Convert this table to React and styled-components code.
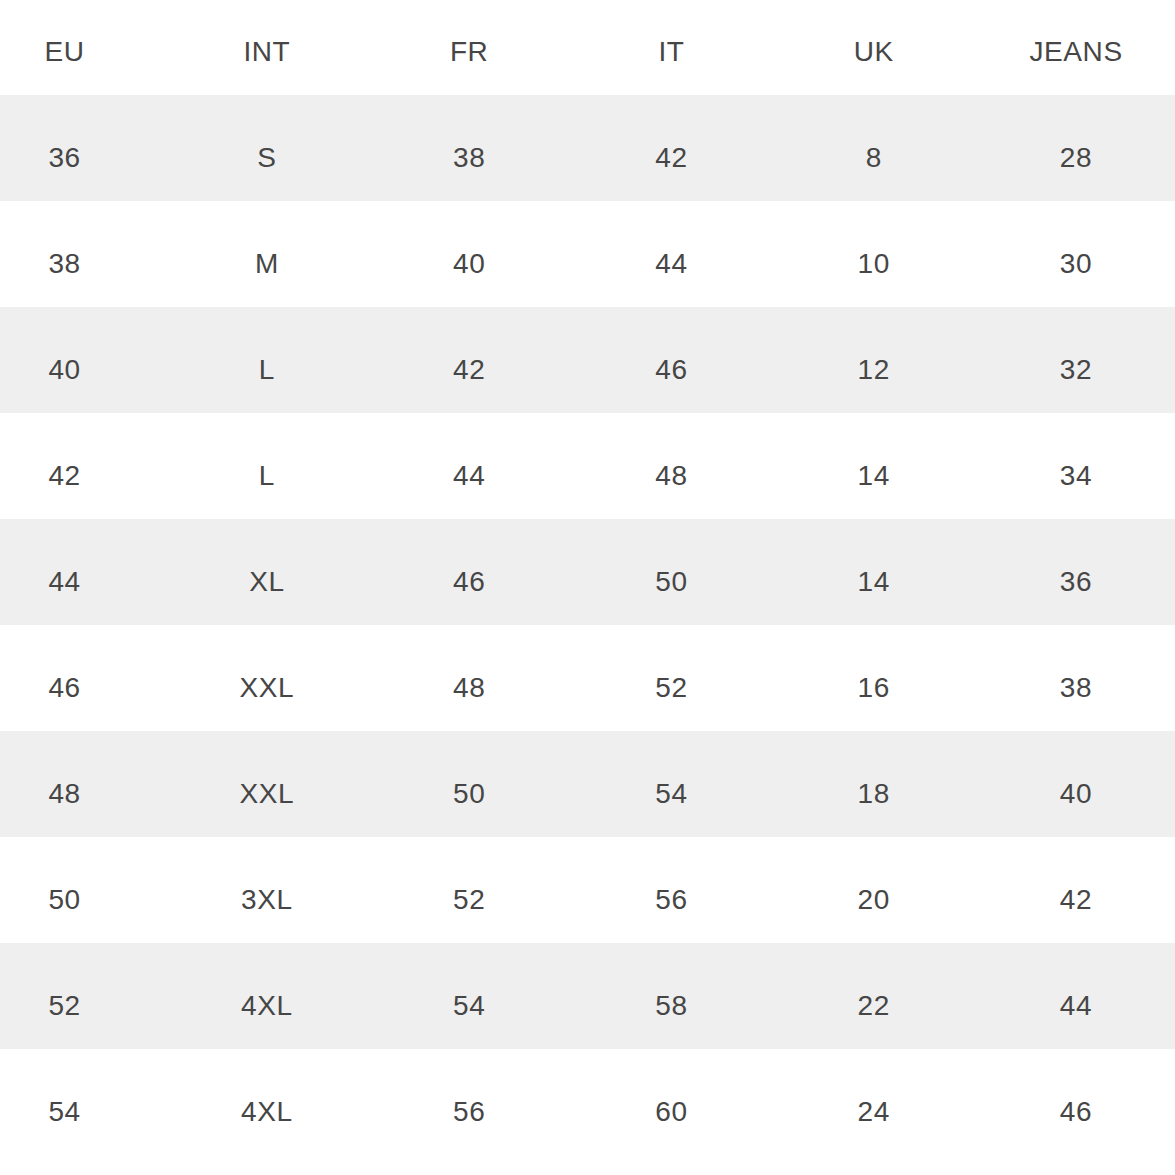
import React from "react";
import styled, { createGlobalStyle } from "styled-components";

const headers = ["EU", "INT", "FR", "IT", "UK", "JEANS"];
const sizes = [
  ["36", "S", "38", "42", "8", "28"],
  ["38", "M", "40", "44", "10", "30"],
  ["40", "L", "42", "46", "12", "32"],
  ["42", "L", "44", "48", "14", "34"],
  ["44", "XL", "46", "50", "14", "36"],
  ["46", "XXL", "48", "52", "16", "38"],
  ["48", "XXL", "50", "54", "18", "40"],
  ["50", "3XL", "52", "56", "20", "42"],
  ["52", "4XL", "54", "58", "22", "44"],
  ["54", "4XL", "56", "60", "24", "46"],
];

const GlobalStyle = createGlobalStyle`
  body {
    margin: 0;
    background: #ffffff;
    font-family: "Liberation Sans", Arial, sans-serif;
    overflow: hidden;
  }
`;

const Table = styled.div`
  width: 1175px;
  height: 1175px;
  overflow: hidden;
  background: #fff;
`;

const Row = styled.div`
  display: grid;
  grid-template-columns: repeat(6, 202.3px);
  align-items: center;
  box-sizing: border-box;
  height: ${(p) => (p.$head ? "95px" : "106px")};
  padding-top: ${(p) => (p.$head ? "8px" : "20px")};
  margin-left: -36.6px;
  padding-left: 0;
  width: calc(100% + 36.6px);
  background: ${(p) => (p.$shade ? "#efefef" : "#ffffff")};
`;

const Cell = styled.div`
  text-align: center;
  font-size: 28px;
  letter-spacing: 0.6px;
  color: #464646;
  white-space: nowrap;
`;

export default function App() {
  return (
    <>
      <GlobalStyle />
      <Table>
        <Row $head>
          {headers.map((h) => (
            <Cell key={h}>{h}</Cell>
          ))}
        </Row>
        {sizes.map((row, i) => (
          <Row key={i} $shade={i % 2 === 0}>
            {row.map((v, j) => (
              <Cell key={j}>{v}</Cell>
            ))}
          </Row>
        ))}
      </Table>
    </>
  );
}
